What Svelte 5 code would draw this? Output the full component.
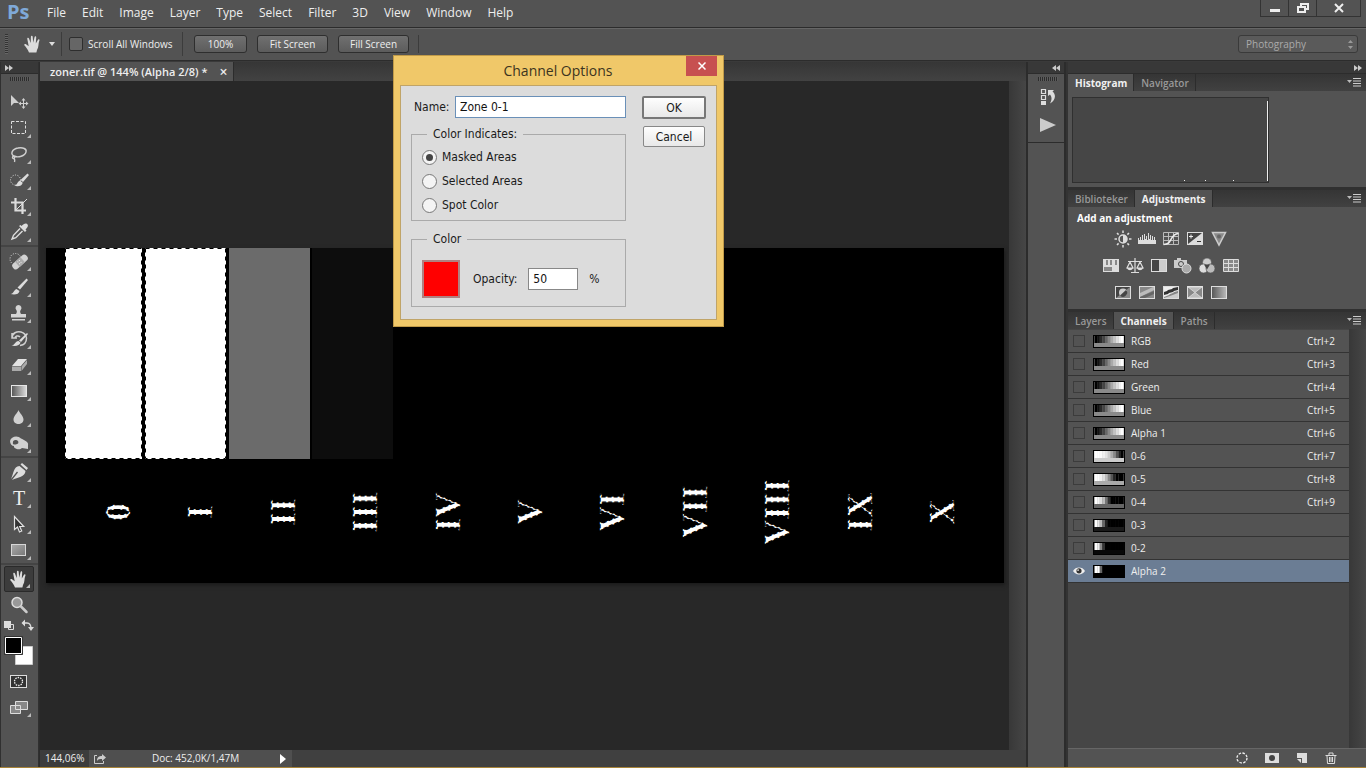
<script lang="ts">
	type Tool = { name: string; icon: string; plain?: boolean };

	const menus = ['File', 'Edit', 'Image', 'Layer', 'Type', 'Select', 'Filter', '3D', 'View', 'Window', 'Help'];

	const hand =
		'<path fill="#dcdcdc" d="M6 18.5C4.8 15.500 3 13 1.500 11.500c-.8-1 .5-1.800 1.500-1.200l2.700 2L4.300 5c-.3-1.400 1.300-1.700 1.700-.4L7.700 9 7.900 2.800c0-1.400 1.700-1.400 1.800 0L10.200 8.800l1.300-5.600c.3-1.300 1.900-1 1.700.3L12.800 9.600l2-3.700c.7-1.200 2.100-.5 1.600.7C15 10.200 16 13 14 16l-.6 2.500z"/>';

	const toolGroups: Tool[][] = [
		[
			{ name: 'Move', plain: true, icon: '<path fill="#d0d0d0" d="M2 3v11l3-3h5z"/><path d="M14.500 7.500v8M10.500 11.500h8" stroke="#d0d0d0"/><path fill="#d0d0d0" d="M14.500 6l2 2.500h-4zM14.500 17l2-2.500h-4zM9.500 11.500l2.500-2v4zM19.500 11.500l-2.500-2v4z"/>' },
			{ name: 'Marquee', icon: '<rect x="2.500" y="3.500" width="14" height="12" fill="none" stroke="#ddd" stroke-dasharray="3 1.500"/>' },
			{ name: 'Lasso', icon: '<path fill="none" stroke="#d0d0d0" stroke-width="1.400" d="M5 12C1 10 3 5 9 4c5-1 9 1 8 4-1 4-8 6-12 4zm0 0c-2 0-2 3 0 2.500 1-.5.5-2.500 0-2.500zm0 2.500c1 1 1 2 .5 3.500"/>' },
			{ name: 'Quick selection', icon: '<circle cx="6.500" cy="10" r="5" fill="none" stroke="#ddd" stroke-dasharray="1 1.500"/><path fill="#dcdcdc" d="M18.500 3.500l1.500 1.500-6 7-2.500-2zM11 10.500l2.700 2.300c-.5 3.500-5 4-8.500 3 3-.5 3-4 5.800-5.300z"/>' },
			{ name: 'Crop', icon: '<path fill="none" stroke="#dcdcdc" stroke-width="2.200" d="M6.500 2v12.500H17M2 6.500h11.500V18"/><path d="M6 15L18 3" stroke="#dcdcdc"/>' },
			{ name: 'Eyedropper', icon: '<path fill="#dcdcdc" d="M18 2c2 1.500.5 3.500-1.500 5.500l1 1-1.500 1.500-6-6L11.500 3l1 1C14.500 2 16.500 1 18 2z"/><path fill="none" stroke="#dcdcdc" stroke-width="1.400" d="M11 6.500l-6.500 6.800L3 17l3.800-1.300L13.500 9"/>' }
		],
		[
			{ name: 'Healing brush', icon: '<circle cx="6.500" cy="8" r="5.500" fill="none" stroke="#ddd" stroke-dasharray="1 1.500"/><g transform="rotate(-42 11 11)"><rect x="2" y="7.500" width="18" height="7" rx="3" fill="#d2d2d2"/><rect x="7.500" y="7.500" width="7" height="7" fill="#aaa"/><path d="M9 9.500h4M9 12h4" stroke="#eee" stroke-dasharray="1 1"/></g>' },
			{ name: 'Brush', icon: '<path fill="#dcdcdc" d="M17.500 1.500L19 3l-8 9.500-2.500-2zM7.500 12l3 2c-.5 3.500-5 4-9 3 3.500-.5 3-4 6-5z"/>' },
			{ name: 'Clone stamp', icon: '<path fill="#d4d4d4" d="M9.500 2a3 3 0 0 1 2.200 5c-1 1.200-.5 3 .3 4h5v3.500H2V11h5c.8-1 1.300-2.800.3-4a3 3 0 0 1 2.200-5zM3 16h13v1.500H3z"/>' },
			{ name: 'History brush', icon: '<path fill="none" stroke="#d0d0d0" stroke-width="1.500" d="M11 8C9 6 6 7 6 9.500M3 9c0-5 5-7 9-6 3 .8 5 3 5.500 6 0 4-2.500 7-6.500 7.500M3 4v5h5"/><path fill="#dcdcdc" d="M18 4l1 1-7 8-2-1.500zM9.500 12l2 1.500c-.5 3-5 4-9 3 3.500-.5 3.500-4 7-4.500z"/>' },
			{ name: 'Eraser', icon: '<path fill="#e2e2e2" d="M9 4h9l-6 7H3z"/><path fill="#aaa" d="M3 11.500h9V16H3zM12.500 11.500L18 5v4l-5.500 7z"/>' },
			{ name: 'Gradient', icon: '<defs><linearGradient id="tool-gradient"><stop stop-color="#555"/><stop offset="1" stop-color="#ddd"/></linearGradient></defs><rect x="2.500" y="4.500" width="15" height="11" fill="url(#tool-gradient)" stroke="#e6e6e6"/>' },
			{ name: 'Blur', icon: '<path fill="#d0d0d0" d="M9.500 3c1 3 5 6 5 9.500 0 6-10 6-10 0C4.500 9 8.500 6 9.500 3z"/>' },
			{ name: 'Sponge', icon: '<path fill="#d0d0d0" fill-rule="evenodd" d="M1 8c1-5 8-6 11-2.500C15 7 20 9 19 12v4l-6-1C10 18 4 15 5 13 3 13 1 11 1 8zm3 1c-1 3 2 3 4 2 2 0 2-4-1-4-2-.3-3 1-3 2z"/>' }
		],
		[
			{ name: 'Pen', icon: '<path fill="#dcdcdc" d="M13 1l6 5-1.500 2-6-5.500zM10.500 4l6 5C16 15 9 15 3 18l6-7.500-1-1L2 17C5 11 4 5 10.500 4z"/>' },
			{ name: 'Type', icon: '' },
			{ name: 'Path selection', icon: '<path fill="#333" stroke="#e2e2e2" stroke-width="1.200" d="M5.500 2.500v13l3-2.500 2 5 2.200-1-2-4.500h4z"/>' },
			{ name: 'Rectangle', icon: '<defs><linearGradient id="tool-rect" x2="1" y2="1"><stop stop-color="#aaa"/><stop offset="1" stop-color="#777"/></linearGradient></defs><rect x="2.500" y="4.500" width="14" height="11" fill="url(#tool-rect)" stroke="#d6d6d6"/>' }
		],
		[
			{ name: 'Hand', icon: hand },
			{ name: 'Zoom', plain: true, icon: '<circle cx="8" cy="7.500" r="5" fill="#999" stroke="#ddd" stroke-width="1.500"/><path d="M12 11.500l5.500 5.500" stroke="#ccc" stroke-width="2.500" stroke-linecap="round"/>' }
		]
	];

	const frame = '<rect x="1.500" y="2.500" width="15" height="12" fill="#888" stroke="#ddd"/>';
	const adjustments = [
		[
			{ name: 'Brightness/Contrast', icon: '<circle cx="9" cy="9" r="4" fill="none" stroke="#ddd" stroke-width="1.500"/><path fill="#ddd" d="M9 5a4 4 0 0 1 0 8z"/><path d="M9 .5v2.500M9 15v2.500M.5 9H3M15 9h2.500M3 3l1.600 1.600M13.400 13.400L15 15M3 15l1.600-1.600M13.400 4.600L15 3" stroke="#ddd" stroke-width="1.500"/>' },
			{ name: 'Levels', icon: '<path fill="#ddd" d="M0 14V8h1v2h1V7h1v3h1V5h1v5h1V4h1v5h1V6h1v4h1V3h1v6h1V5h1v5h1V6h1v4h1V7h1v3h1v4z"/>' },
			{ name: 'Curves', icon: '<path fill="none" stroke="#bbb" d="M1.500 2.500h15v12h-15zM1.500 6.500h15M1.500 10.500h15M6.500 2.500v12M11.500 2.500v12"/><path fill="none" stroke="#eee" stroke-width="1.500" d="M1.500 14.500c10 0 5-10 15-11"/>' },
			{ name: 'Exposure', icon: '<rect x="1.500" y="2.500" width="15" height="12" fill="#444" stroke="#ddd"/><path fill="#ddd" d="M16 3v11H2z"/><path d="M3 6.500h4M5 4.500v4" stroke="#eee"/><path d="M11 11.500h4" stroke="#333"/>' },
			{ name: 'Vibrance', icon: '<path fill="#8a8a8a" stroke="#ccc" stroke-width="1.500" d="M2.500 2.500h13L9 15z"/><circle cx="9" cy="6.500" r="2" fill="#666"/>' }
		],
		[
			{ name: 'Hue/Saturation', icon: '<path fill="#ddd" d="M1 2h16v13H1z"/><path fill="#888" d="M4 3h2v5H4zM8 3h2v5H8zM13 3h2v5h-2zM2 10h8v4H2z"/>' },
			{ name: 'Color Balance', icon: '<path fill="none" stroke="#ddd" stroke-width="1.200" d="M2 4.500h14M9 1v14M5 15.500h8M4 5l-3 6h6zM14 5l-3 6h6z"/><path fill="#ddd" d="M1 11h6c-1 3-5 3-6 0zM11 11h6c-1 3-5 3-6 0z"/>' },
			{ name: 'Black & White', icon: '<rect x="1.500" y="2.500" width="15" height="12" fill="#444" stroke="#ddd"/><path fill="#ccc" d="M9 3h7v11H9z"/>' },
			{ name: 'Photo Filter', icon: '<path fill="#ccc" d="M0 3h3V1h4v2h6v8H0z"/><circle cx="7" cy="7" r="2.500" fill="#ccc" stroke="#444"/><circle cx="12.500" cy="11.500" r="4.500" fill="#aaa" stroke="#ddd"/>' },
			{ name: 'Channel Mixer', icon: '<g stroke="#555" stroke-width=".7"><circle cx="9" cy="5.500" r="4.500" fill="#ccc"/><circle cx="5.500" cy="11.500" r="4.500" fill="#ddd"/><circle cx="12.500" cy="11.500" r="4.500" fill="#bbb"/></g><path fill="#444" d="M6 7.500h6l-3 5z"/>' },
			{ name: 'Color Lookup', icon: '<path fill="#888" stroke="#ddd" d="M1.500 2.500h15v12h-15zM1.500 6.500h15M1.500 10.500h15M6.500 2.500v12M11.500 2.500v12"/>' }
		],
		[
			{ name: 'Invert', icon: frame + '<path fill="#444" d="M2 3h14L2 14z"/><circle cx="9" cy="8.500" r="4" fill="#ccc"/><path fill="#444" d="M12 6a4 4 0 0 1-6 5.500z"/>' },
			{ name: 'Posterize', icon: frame + '<path fill="#bbb" d="M2 9l13-6h1v3L2 13z"/><path fill="#666" d="M2 13l14-6v3l-9 4H2z"/>' },
			{ name: 'Threshold', icon: frame + '<path fill="#eee" d="M2 3h14v4l-4 1-1 1-3 1-1 1-5 2z"/><path fill="#333" d="M2 8l3-1 1-1 4-1 1-1 5-1v3l-4 1-1 1-4 1-1 1-4 1z"/><path fill="#ccc" d="M8 12l8-3v5H2z"/>' },
			{ name: 'Selective Color', icon: frame + '<path fill="#bbb" stroke="#eee" stroke-width=".6" d="M2 3h14L2 14h14z"/>' },
			{ name: 'Gradient Map', icon: '<defs><linearGradient id="adj-map"><stop stop-color="#555"/><stop offset="1" stop-color="#bbb"/></linearGradient></defs><rect x="1.500" y="2.500" width="15" height="12" fill="url(#adj-map)" stroke="#ddd"/>' }
		]
	];

	const ramp = ['#000', '#111', '#2a2a2a', '#444', '#666', '#888', '#aaa', '#c4c4c4', '#ddd', '#f2f2f2', '#fff'];
	const channels = [
		{ name: 'RGB', key: 'Ctrl+2', strips: ramp, base: '#8a8a8a' },
		{ name: 'Red', key: 'Ctrl+3', strips: ramp, base: '#8a8a8a' },
		{ name: 'Green', key: 'Ctrl+4', strips: ramp, base: '#8a8a8a' },
		{ name: 'Blue', key: 'Ctrl+5', strips: ramp, base: '#8a8a8a' },
		{ name: 'Alpha 1', key: 'Ctrl+6', strips: ramp, base: '#8a8a8a' },
		{ name: '0-6', key: 'Ctrl+7', strips: ['#fff', '#fff', '#fafafa', '#f0f0f0', '#e4e4e4', '#ccc', '#aaa', '#888', '#555', '#222', '#000'], base: '#ccc' },
		{ name: '0-5', key: 'Ctrl+8', strips: ['#fff', '#fff', '#f0f0f0', '#ddd', '#bbb', '#888', '#555', '#222', '#000', '#000', '#000'], base: '#aaa' },
		{ name: '0-4', key: 'Ctrl+9', strips: ['#fff', '#f4f4f4', '#ddd', '#bbb', '#777', '#333', '#000', '#000', '#000', '#000', '#000'], base: '#666' },
		{ name: '0-3', key: '', strips: ['#fff', '#e8e8e8', '#bbb', '#666', '#222', '#000', '#000', '#000', '#000', '#000', '#000'], base: '#1a1a1a' },
		{ name: '0-2', key: '', strips: ['#fff', '#eee', '#888', '#333', '#000', '#000', '#000', '#000', '#000', '#000', '#000'], base: '#080808' },
		{ name: 'Alpha 2', key: '', strips: ['#fff', '#fff', '#666', '#000', '#000', '#000', '#000', '#000', '#000', '#000', '#000'], base: '#000' }
	];

	const numerals = ['0', 'I', 'II', 'III', 'IV', 'V', 'VI', 'VII', 'VIII', 'IX', 'X'];
	const indicates = ['Masked Areas', 'Selected Areas', 'Spot Color'];

	let activeChannel = $state('Alpha 2');
	let activeTool = $state('Hand');
	let name = $state('Zone 0-1');
	let opacity = $state('50');
	let indicate = $state('Masked Areas');
</script>

{#snippet tabs(items: string[], active: string)}
	<div class="tabs">
		{#each items as item}
			<button class="tab" class:active={item === active}>{item}</button>
		{/each}
		<button class="panel-menu" aria-label="Panel menu">
			<svg width="14" height="9" viewBox="0 0 14 9"><path fill="#bbb" d="M0 2h5L2.500 5z" /><path d="M6 .5h8M6 3h8M6 5.500h8M6 8h8" stroke="#ccc" /></svg>
		</button>
	</div>
{/snippet}

<div class="app">
	<header class="menubar">
		<span class="logo">Ps</span>
		<nav>
			{#each menus as menu}
				<button>{menu}</button>
			{/each}
		</nav>
		<div class="window-buttons">
			<button aria-label="Minimize"><svg width="12" height="10" viewBox="0 0 12 10"><path fill="#eee" d="M1 6h10v3H1z" /></svg></button>
			<button aria-label="Restore"><svg width="12" height="10" viewBox="0 0 12 10"><path fill="none" stroke="#eee" stroke-width="2" d="M4 3V1h7v5H9M1 4h7v5H1z" /></svg></button>
			<button class="wide" aria-label="Close"><svg width="12" height="10" viewBox="0 0 12 10"><path d="M2 1l8 8M10 1L2 9" stroke="#eee" stroke-width="2" /></svg></button>
		</div>
	</header>

	<div class="options">
		<span class="grip-v"></span>
		<button class="current-tool" aria-label="Hand tool presets">
			<svg width="20" height="20" viewBox="0 0 20 20">{@html hand}</svg>
			<svg width="6" height="4" viewBox="0 0 6 4"><path fill="#ddd" d="M0 0h6L3 4z" /></svg>
		</button>
		<label class="scroll-all"><input type="checkbox" />Scroll All Windows</label>
		<div class="zoom-buttons">
			<button class="narrow">100%</button>
			<button>Fit Screen</button>
			<button>Fill Screen</button>
		</div>
		<select aria-label="Workspace"><option>Photography</option></select>
		<svg class="updown" width="7" height="9" viewBox="0 0 7 9"><path fill="#999" d="M3.500 0L6 3H1zM3.500 9L6 6H1z" /></svg>
	</div>

	<div class="workspace">
		<aside class="tools">
			<div class="dock-head"><svg width="8" height="6" viewBox="0 0 8 6"><path fill="#ccc" d="M0 0l4 3-4 3zM4 0l4 3-4 3z" /></svg></div>
			<div class="grip-row"><span class="grip"></span></div>
			{#each toolGroups as group, i}
				<div class="tool-group" class:ruled={i > 0}>
					{#each group as tool}
						<button
							class="tool"
							class:selected={tool.name === activeTool}
							class:plain={tool.plain}
							aria-label={tool.name}
							onclick={() => (activeTool = tool.name)}
						>
							{#if tool.icon}
								<svg width="20" height="20" viewBox="0 0 20 20">{@html tool.icon}</svg>
							{:else}
								<span class="letter">T</span>
							{/if}
						</button>
					{/each}
				</div>
			{/each}
			<svg class="colors" width="31" height="48" viewBox="0 0 31 48">
				<path fill="#555" stroke="#ddd" d="M4.500 6.500h5v5h-5z" />
				<path fill="#ddd" d="M0 3h7v7H0z" />
				<path fill="none" stroke="#ddd" stroke-width="1.300" d="M20 5h3q4 0 4 6" />
				<path fill="#ddd" d="M21 1.500v7L17.500 5zM24 9h6l-3 4z" />
				<path fill="#fff" stroke="#ccc" d="M11.500 28.500h17v18h-17z" />
				<path fill="#000" stroke="#333" d="M.5 18.500h18v18H.5z" />
				<path fill="#000" stroke="#fff" d="M1.500 19.500h16v16h-16z" />
			</svg>
			<button class="tool plain" aria-label="Quick mask">
				<svg width="20" height="20" viewBox="0 0 20 20"><rect x="1.500" y="4.500" width="16" height="12" fill="#333" stroke="#ddd" /><circle cx="9.500" cy="10.500" r="4" fill="none" stroke="#eee" stroke-width="1.300" stroke-dasharray="1.500 1" /></svg>
			</button>
			<button class="tool" aria-label="Screen mode">
				<svg width="20" height="20" viewBox="0 0 20 20"><path fill="#888" stroke="#ddd" d="M1.500 8.500h10v8h-10zM6.500 4.500h12v8h-12z" /></svg>
			</button>
		</aside>

		<main>
			<div class="doc-tabs">
				<div class="doc-tab">zoner.tif @ 144% (Alpha 2/8) *<button aria-label="Close tab">×</button></div>
			</div>
			<div class="doc-body">
				<div class="canvas">
					<svg class="image" viewBox="0 0 958 335">
						<rect width="958" height="335" fill="#000" />
						<rect x="183" width="81" height="211" fill="#6b6b6b" />
						<rect x="266" width="81" height="211" fill="#0d0d0d" />
						<g fill="#fff">
							<rect x="19" width="77" height="211" />
							<rect x="99" width="81" height="211" />
						</g>
						<g fill="none" stroke="#000" stroke-dasharray="4 4">
							<rect x="19.5" y=".5" width="76" height="210" />
							<rect x="99.5" y=".5" width="80" height="210" />
						</g>
						{#each numerals as numeral, i}
							<text class="numeral" transform="translate({84 + i * 82.4} 264) rotate(-90)">{numeral}</text>
						{/each}
					</svg>
				</div>
				<div class="scroll-v"></div>
			</div>
			<footer class="status">
				<span class="percent">144,06%</span>
				<button class="share" aria-label="Share"><svg width="14" height="12" viewBox="0 0 14 12"><path fill="none" stroke="#ccc" d="M4 2.500H1.500v8h9V8" /><path fill="#ccc" d="M4 8c0-4 2-5 5-5V1l4 3.500L9 8V6C7 6 5 6 4 8z" /></svg></button>
				<span class="doc-size">Doc: 452,0K/1,47M</span>
				<button class="more" aria-label="Status options"><svg width="6" height="10" viewBox="0 0 6 10"><path fill="#fff" d="M0 0l6 5-6 5z" /></svg></button>
			</footer>
		</main>

		<aside class="icon-dock">
			<div class="dock-head end"><svg width="8" height="6" viewBox="0 0 8 6"><path fill="#ccc" d="M4 0L0 3l4 3zM8 0L4 3l4 3z" /></svg></div>
			<div class="dock-body">
				<span class="grip"></span>
				<button aria-label="History"><svg width="16" height="18" viewBox="0 0 16 18"><path fill="none" stroke="#ddd" stroke-width="1.200" d="M1.500 1.500h4v4h-4zM1.500 7.500h4v4h-4z" /><path fill="#ddd" d="M1 13h5v4H1zM8 2h6l-1.500 1.500c4 3 3 9-2.500 12 1.500-3 2.500-6 0-9L8 8z" /></svg></button>
				<button aria-label="Actions"><svg width="16" height="14" viewBox="0 0 16 14"><path fill="#ccc" d="M0 0l16 7-16 7z" /></svg></button>
			</div>
			<div class="dock-rest"></div>
		</aside>

		<aside class="panels">
			<div class="dock-head end"><svg width="8" height="6" viewBox="0 0 8 6"><path fill="#ccc" d="M0 0l4 3-4 3zM4 0l4 3-4 3z" /></svg></div>
			<section>
				{@render tabs(['Histogram', 'Navigator'], 'Histogram')}
				<div class="histogram">
					<svg width="197" height="86" viewBox="0 0 197 86">
						<rect x=".5" y=".5" width="196" height="85" fill="#464646" stroke="#303030" />
						<path fill="#eee" d="M195 4h1v80h-1zM112 83h1v1h-1zM133 83h1v1h-1zM161 83h1v1h-1z" />
					</svg>
				</div>
			</section>
			<section>
				{@render tabs(['Biblioteker', 'Adjustments'], 'Adjustments')}
				<div class="adjustments">
					<h2>Add an adjustment</h2>
					{#each adjustments as row}
						<div class="adjust-row">
							{#each row as item}
								<button aria-label={item.name}><svg width="18" height="18" viewBox="0 0 18 18">{@html item.icon}</svg></button>
							{/each}
						</div>
					{/each}
				</div>
			</section>
			<section class="channels-panel">
				{@render tabs(['Layers', 'Channels', 'Paths'], 'Channels')}
				<div class="channel-area">
					<ul>
						{#each channels as channel}
							<li class:active={channel.name === activeChannel}>
								{#if channel.name === activeChannel}
									<svg class="eye" width="13" height="10" viewBox="0 0 13 10"><path fill="#eee" d="M0 5C3 0 10 0 13 5 10 10 3 10 0 5z" /><circle cx="6.500" cy="4.800" r="2.800" fill="#333" /><circle cx="5.500" cy="4" r="1" fill="#ddd" /></svg>
								{:else}
									<input type="checkbox" aria-label="Show {channel.name}" />
								{/if}
								<button onclick={() => (activeChannel = channel.name)}>
									<svg class="thumb" width="32" height="13" viewBox="0 0 32 13">
										<rect width="32" height="13" fill="#000" />
										<rect x="1" y="1" width="30" height="11" fill={channel.base} />
										{#each channel.strips as fill, i}
											<rect x={1.5 + i * 2.65} y="1" width="2.7" height="7" {fill} />
										{/each}
									</svg>
									<span>{channel.name}</span>
									<span class="key">{channel.key}</span>
								</button>
							</li>
						{/each}
					</ul>
					<div class="scroll-v"></div>
				</div>
				<footer class="panel-foot">
					<button aria-label="Load channel as selection"><svg width="12" height="12" viewBox="0 0 12 12"><circle cx="6" cy="6" r="5" fill="none" stroke="#eee" stroke-width="1.300" stroke-dasharray="2.500 1.400" /></svg></button>
					<button aria-label="Save selection as channel"><svg width="14" height="12" viewBox="0 0 14 12"><path fill="#ddd" d="M0 1h14v10H0z" /><circle cx="7" cy="6" r="3" fill="#444" /></svg></button>
					<button aria-label="New channel"><svg width="12" height="12" viewBox="0 0 12 12"><path fill="#ddd" d="M1 1h10v10H6V6H1zM1 7h4v4z" /></svg></button>
					<button aria-label="Delete channel"><svg width="12" height="12" viewBox="0 0 12 12"><path fill="none" stroke="#ddd" d="M.5 3.500h11M4 3V1h4v2M2 4l.5 7.500h7L10 4M4.500 5v5M6 5v5M7.500 5v5" /></svg></button>
				</footer>
			</section>
		</aside>
	</div>

	<form class="dialog" aria-label="Channel Options" onsubmit={(e) => e.preventDefault()}>
		<div class="dialog-title">
			<h1>Channel Options</h1>
			<button type="button" class="close" aria-label="Close"><svg width="8" height="8" viewBox="0 0 8 8"><path d="M.5.5l7 7M7.500.5l-7 7" stroke="#fff" stroke-width="1.500" /></svg></button>
		</div>
		<div class="dialog-body">
			<div class="fields">
				<div class="name-row">
					<label for="channel-name">Name:</label>
					<input id="channel-name" type="text" bind:value={name} />
				</div>
				<fieldset class="indicates">
					<legend>Color Indicates:</legend>
					{#each indicates as item}
						<label><input type="radio" name="indicates" value={item} bind:group={indicate} />{item}</label>
					{/each}
				</fieldset>
				<fieldset class="color">
					<legend>Color</legend>
					<div class="color-row">
						<button type="button" class="swatch" aria-label="Pick color"></button>
						<label for="opacity">Opacity:</label>
						<input id="opacity" type="text" bind:value={opacity} />
						<span>%</span>
					</div>
				</fieldset>
			</div>
			<div class="actions">
				<button class="ok">OK</button>
				<button type="button">Cancel</button>
			</div>
		</div>
	</form>
</div>

<style>
	:global(body) {
		background: #535353;
	}

	.app {
		position: relative;
		display: flex;
		flex-direction: column;
		box-sizing: border-box;
		min-height: 100vh;
		border-bottom: 1px solid #a88438;
		background: #535353;
		color: #eee;
		font: 10px/14px "Open Sans", sans-serif;
	}

	.app *,
	.app *::after {
		box-sizing: border-box;
	}

	button {
		display: flex;
		align-items: center;
		justify-content: center;
		margin: 0;
		padding: 0;
		border: 0;
		background: none;
		color: inherit;
		font: inherit;
	}

	svg {
		display: block;
		flex: none;
	}

	.menubar {
		display: flex;
		height: 27px;
		font-size: 12px;
		line-height: 26px;
	}

	.logo {
		width: 39px;
		padding-left: 7px;
		color: #7fa9d8;
		font-weight: bold;
		font-size: 20px;
		line-height: 24px;
	}

	.menubar nav {
		display: flex;
		flex: 1;
	}

	.menubar nav button {
		height: 26px;
		padding: 0 8px;
	}

	.window-buttons {
		display: flex;
		height: 17px;
		margin-right: 5px;
		border: 1px solid #333;
		border-top: 0;
	}

	.window-buttons button {
		width: 28px;
		border-right: 1px solid #333;
	}

	.window-buttons .wide {
		width: 43px;
		border: 0;
	}

	.options {
		display: flex;
		align-items: center;
		height: 34px;
		padding: 0 8px 0 5px;
		border-top: 1px solid #2c2c2c;
		border-bottom: 1px solid #2c2c2c;
		box-shadow: inset 0 1px #666;
	}

	.grip-v {
		width: 3px;
		height: 20px;
		background: repeating-linear-gradient(#333 0 1px, #666 1px 2px);
	}

	.current-tool {
		gap: 6px;
		width: 54px;
		height: 24px;
		padding-left: 8px;
		border-right: 1px solid #3c3c3c;
	}

	.scroll-all {
		display: flex;
		align-items: center;
		gap: 5px;
		width: 121px;
		height: 24px;
		padding-left: 7px;
		border-right: 1px solid #3c3c3c;
		white-space: nowrap;
	}

	.scroll-all input {
		appearance: none;
		width: 14px;
		height: 14px;
		margin: 0;
		border: 1px solid #2e2e2e;
		border-radius: 2px;
		background: #666;
	}

	.zoom-buttons {
		display: flex;
		gap: 10px;
		padding: 0 9px 0 11px;
		border-right: 1px solid #3c3c3c;
	}

	.zoom-buttons button {
		width: 71px;
		height: 18px;
		border: 1px solid #2e2e2e;
		border-radius: 3px;
		background: linear-gradient(#707070, #5c5c5c);
	}

	.zoom-buttons .narrow {
		width: 53px;
	}

	.options select {
		appearance: none;
		width: 120px;
		height: 18px;
		margin-left: auto;
		padding: 0 7px;
		border: 1px solid #3a3a3a;
		border-radius: 3px;
		background: #5a5a5a;
		color: #aaa;
		font: inherit;
	}

	.updown {
		margin: 0 4px 0 -11px;
	}

	.workspace {
		display: flex;
		flex: 1;
		border-top: 1px solid #3a3a3a;
	}

	.dock-head {
		display: flex;
		align-items: center;
		height: 12px;
		padding: 0 4px;
		border-bottom: 1px solid #2c2c2c;
		background: #383838;
	}

	.dock-head.end {
		justify-content: flex-end;
	}

	.tools {
		display: flex;
		flex-direction: column;
		width: 39px;
		border: solid #303030;
		border-width: 0 1px;
	}

	.grip-row {
		display: flex;
		justify-content: center;
		height: 15px;
		padding-top: 3px;
	}

	.grip {
		width: 20px;
		height: 4px;
		background: repeating-linear-gradient(90deg, #2c2c2c 0 1px, #5c5c5c 1px 2px);
	}

	.tool-group.ruled {
		padding-top: 1px;
		border-top: 2px solid #444;
	}

	.tool {
		position: relative;
		width: 30px;
		height: 26px;
		margin-left: 3px;
	}

	.tool::after {
		content: "";
		position: absolute;
		right: 3px;
		bottom: 3px;
		border: 2px solid #bbb;
		border-top-color: transparent;
		border-left-color: transparent;
	}

	.tool.plain::after {
		display: none;
	}

	.tool.selected {
		border: 1px solid #2a2a2a;
		border-radius: 2px;
		background: #3c3c3c;
	}

	.letter {
		font: 20px/26px "Liberation Serif", serif;
	}

	.colors {
		margin: 0 0 2px 3px;
	}

	main {
		display: flex;
		flex: 1;
		flex-direction: column;
		min-width: 0;
		border-left: 1px solid #2c2c2c;
	}

	.doc-tabs {
		display: flex;
		height: 19px;
		background: linear-gradient(#363636, #424242);
	}

	.doc-tab {
		display: flex;
		align-items: center;
		gap: 12px;
		padding: 0 6px 0 10px;
		border-right: 1px solid #2c2c2c;
		background: #535353;
		font-weight: 600;
		font-size: 11px;
		white-space: nowrap;
	}

	.doc-tab button {
		font-size: 14px;
	}

	.doc-body {
		display: flex;
		flex: 1;
		background: #282828;
	}

	.canvas {
		display: flex;
		flex: 1;
		align-items: center;
		min-width: 0;
		padding: 0 5px 0 6px;
	}

	.image {
		width: 100%;
		flex: 0 1 auto;
		box-shadow: 1px 2px 4px #1a1a1a;
	}

	.numeral {
		fill: #fff;
		stroke: #000;
		stroke-width: 1.3;
		stroke-dasharray: 4 2;
		font: bold 35px "Liberation Serif", serif;
		text-anchor: middle;
	}

	.scroll-v {
		width: 17px;
		background: linear-gradient(90deg, #383838, #464646);
	}

	.status {
		display: flex;
		align-items: center;
		height: 17px;
		background: #404040;
		line-height: 17px;
	}

	.percent {
		width: 49px;
		padding-left: 5px;
		background: #3c3c3c;
	}

	.share {
		width: 22px;
		height: 17px;
		background: #4f4f4f;
	}

	.doc-size {
		width: 162px;
		padding-left: 41px;
		background: #4f4f4f;
	}

	.more {
		width: 19px;
		height: 17px;
		background: #4f4f4f;
	}

	.icon-dock {
		display: flex;
		flex-direction: column;
		width: 40px;
		border: solid #2c2c2c;
		border-width: 0 2px;
	}

	.dock-body {
		display: flex;
		flex-direction: column;
		align-items: center;
		gap: 12px;
		height: 69px;
		padding: 3px 0 0 3px;
		border-bottom: 1px solid #2c2c2c;
	}

	.dock-body .grip {
		margin-bottom: -5px;
	}

	.dock-rest {
		flex: 1;
	}

	.panels {
		display: flex;
		flex-direction: column;
		width: 300px;
		border-left: 2px solid #333;
	}

	.tabs {
		display: flex;
		height: 17px;
		background: linear-gradient(#353535, #414141);
		font-weight: 600;
		line-height: 16px;
	}

	.tab {
		padding: 0 6px 0 7px;
		border-right: 1px solid #2c2c2c;
		color: #999;
	}

	.tab.active {
		background: #535353;
		color: #f0f0f0;
		font-weight: bold;
	}

	.panel-menu {
		margin: 0 5px 0 auto;
	}

	.histogram {
		height: 99px;
		padding: 6px 4px;
		border-bottom: 3px solid #303030;
	}

	.adjustments {
		height: 105px;
		border-bottom: 3px solid #303030;
		padding-top: 4px;
	}

	.adjustments h2 {
		margin: 0 0 5px 9px;
		color: #fff;
		font: inherit;
		font-weight: bold;
	}

	.adjust-row {
		display: flex;
		justify-content: center;
		gap: 6px;
		width: 206px;
		margin-bottom: 9px;
	}

	.channels-panel {
		display: flex;
		flex: 1;
		flex-direction: column;
	}

	.channel-area {
		display: flex;
		flex: 1;
		background: #464646;
	}

	.channel-area ul {
		flex: 1;
		margin: 0;
		padding: 1px 0 0;
		list-style: none;
	}

	.channel-area li {
		display: flex;
		align-items: center;
		gap: 8px;
		height: 23px;
		padding-left: 5px;
		border-bottom: 1px solid #333;
		background: #535353;
	}

	.channel-area li.active {
		background: #6b7d94;
	}

	.channel-area input {
		appearance: none;
		width: 12px;
		height: 12px;
		margin: 0;
		border: 1px solid #3c3c3c;
	}

	.eye {
		width: 12px;
	}

	.channel-area li button {
		flex: 1;
		gap: 6px;
		padding-right: 14px;
	}

	.key {
		margin-left: auto;
	}

	.panel-foot {
		display: flex;
		align-items: center;
		justify-content: flex-end;
		gap: 17px;
		height: 19px;
		padding-right: 29px;
		border-top: 1px solid #666;
	}

	.dialog {
		position: absolute;
		top: 55px;
		left: 393px;
		width: 331px;
		height: 272px;
		padding: 0 6px 7px;
		border: 1px solid #c09a48;
		background: #f0c869;
		color: #1a1a1a;
		font: 12px/16px "DejaVu Sans Condensed", "DejaVu Sans", sans-serif;
	}

	.dialog-title {
		display: flex;
		height: 29px;
	}

	.dialog h1 {
		flex: 1;
		margin: 0;
		padding-left: 30px;
		color: #3c3420;
		font: 14px/30px "Open Sans", sans-serif;
		text-align: center;
	}

	.close {
		width: 31px;
		height: 20px;
		background: #c75050;
	}

	.dialog-body {
		display: flex;
		gap: 16px;
		height: 235px;
		padding: 10px;
		border: 1px solid #c0a468;
		background: #dcdcdc;
	}

	.fields {
		width: 215px;
	}

	.name-row {
		display: flex;
		align-items: center;
		justify-content: space-between;
		padding-left: 3px;
	}

	.dialog input[type="text"] {
		width: 171px;
		height: 22px;
		padding: 0 4px;
		border: 1px solid #6a90b8;
		background: #fff;
		color: #111;
		font: inherit;
	}

	fieldset {
		min-width: 0;
		margin: 0;
		padding: 0 10px;
		border: 1px solid #aaa;
	}

	legend {
		padding: 0 6px;
		margin-left: 5px;
	}

	.indicates {
		height: 95px;
		padding-top: 3px;
		margin-top: 8px;
	}

	.indicates label {
		display: flex;
		align-items: center;
		gap: 5px;
		height: 24px;
	}

	.indicates input {
		display: grid;
		place-items: center;
		appearance: none;
		width: 15px;
		height: 15px;
		margin: 0;
		border: 1px solid #777;
		border-radius: 50%;
		background: #f4f4f4;
	}

	.indicates input:checked::after {
		content: "";
		width: 7px;
		height: 7px;
		border-radius: 50%;
		background: #444;
	}

	.color {
		height: 76px;
		margin-top: 10px;
	}

	.color-row {
		display: flex;
		align-items: center;
		gap: 11px;
		padding-top: 13px;
	}

	.swatch {
		width: 38px;
		height: 38px;
		margin-right: 2px;
		border: 2px solid #b08080;
		background: #f00;
	}

	.dialog #opacity {
		width: 50px;
		border-color: #888;
	}

	.actions {
		display: flex;
		flex-direction: column;
		gap: 7px;
		width: 64px;
	}

	.actions button {
		width: 62px;
		height: 21px;
		margin-left: 1px;
		border: 1px solid #888;
		border-radius: 2px;
		background: linear-gradient(#fefefe, #e8e8e8);
	}

	.actions .ok {
		width: 64px;
		height: 23px;
		margin-left: 0;
		border: 2px solid #777;
	}
</style>
